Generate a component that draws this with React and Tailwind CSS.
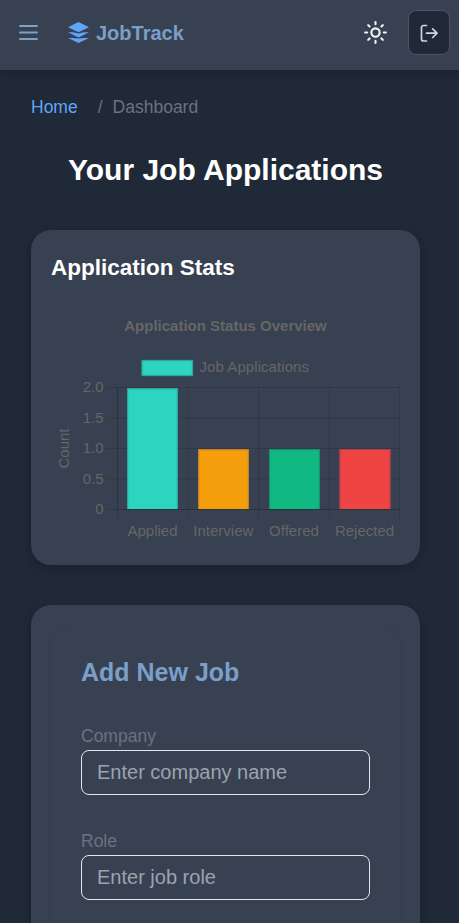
const FONT = "font-['Liberation_Sans',Arial,sans-serif]";

const bars = [
  { x: 127, h: 121, label: "Applied", cx: 152.5, fill: "#2dd4bf", line: "#27a79f" },
  { x: 198, h: 60, label: "Interview", cx: 223.3, fill: "#f59e0b", line: "#bd8127" },
  { x: 269, h: 60, label: "Offered", cx: 294, fill: "#10b981", line: "#1c9073" },
  { x: 339.5, h: 60, label: "Rejected", cx: 364.5, fill: "#ef4444", line: "#b83e4a" },
];

const ticks = [
  { label: "2.0", y: 387.5 },
  { label: "1.5", y: 418 },
  { label: "1.0", y: 448.5 },
  { label: "0.5", y: 479 },
  { label: "0", y: 509.5 },
];

function StatsChart() {
  return (
    <svg
      viewBox="51 305 349 240"
      className="block h-[240px] w-[349px]"
      fontFamily="'Liberation Sans', Arial, sans-serif"
      fontSize="15"
      fill="#666666"
    >
      <text x="225.5" y="330.5" textAnchor="middle" fontWeight="bold">Application Status Overview</text>
      <rect x="142" y="360.5" width="50.5" height="15" fill="#2dd4bf" stroke="#27a79f" strokeWidth="1.25" />
      <text x="199.5" y="372" textLength="109.5">Job Applications</text>
      <g stroke="#000" strokeOpacity="0.12" strokeWidth="1">
        {ticks.map((t) => <line key={t.label} x1="107" x2="400" y1={t.y} y2={t.y} />)}
        {[117.5, 188, 258.5, 329.5, 399.5].map((x) => <line key={x} x1={x} x2={x} y1="387" y2="519" />)}
        <line x1="117.5" x2="117.5" y1="387" y2="509" />
        <line x1="117" x2="400" y1="509.5" y2="509.5" />
      </g>
      {ticks.map((t) => <text key={t.label} x="103.5" y={t.y + 4.5} textAnchor="end">{t.label}</text>)}
      <text transform="translate(69 448.5) rotate(-90)" textAnchor="middle">Count</text>
      {bars.map((b) => (
        <g key={b.label}>
          <rect x={b.x} y={509 - b.h} width="51" height={b.h} fill={b.fill} />
          <path d={`M${b.x + 0.6} 509V${509.6 - b.h}h49.8V509`} fill="none" stroke={b.line} strokeWidth="1.2" />
          <text x={b.cx} y="536" textAnchor="middle">{b.label}</text>
        </g>
      ))}
    </svg>
  );
}

function Field({ label, placeholder }) {
  return (
    <label className="flex flex-col">
      <span className="h-[27px] pt-px text-[17.5px] leading-[25px] text-[#6b7280]">{label}</span>
      <input
        placeholder={placeholder}
        className="h-[45px] w-full rounded-[8px] border border-[#e5e7eb] bg-transparent px-[15px] text-[20px] outline-none placeholder:text-[#9ca3af]"
      />
    </label>
  );
}

export default function App() {
  return (
    <div className={`h-[923px] overflow-hidden bg-[#1f2937] ${FONT}`}>
      <header className="relative flex h-[70px] items-center bg-[#374151] pr-[9px] pl-[19px] shadow-[0_3px_8px_rgba(0,0,0,0.15)]">
        <svg className="mb-[5px] size-[19px]" viewBox="0 0 19 19" fill="none" stroke="#7da2ca" strokeWidth="1.9" strokeLinecap="round">
          <path d="M1 3h17M1 9.5h17M1 16h17" />
        </svg>
        <svg className="mb-[5px] ml-[30px] h-[21px] w-[21px]" viewBox="0 0 21 21" fill="#60a5fa">
          <path d="M10.5 0 21 5.2 10.5 10.3 0 5.2Z" />
          <path d="M0 10.3H5L10.5 11.5 16 10.3H21L10.5 15.4Z" />
          <path d="M0 16H5L10.5 16.6 16 16H21L10.5 21Z" />
        </svg>
        <span className="mb-[5px] ml-[7px] text-[20px] font-bold text-[#7a9fc9]">JobTrack</span>
        <svg className="mb-[5px] ml-auto size-[25px]" viewBox="0 0 24 24" fill="none" stroke="#f3f4f6" strokeWidth="2" strokeLinecap="round">
          <circle cx="12" cy="12" r="4" />
          <path d="M12 2v2M12 20v2M2 12h2M20 12h2M4.93 4.93l1.41 1.41M17.66 17.66l1.41 1.41M4.93 19.07l1.41-1.41M17.66 6.34l1.41-1.41" />
        </svg>
        <button className="mb-[5px] ml-[20px] flex h-[45px] w-[42px] items-center justify-center rounded-[8px] border border-[#4b5563] bg-[#1f2937]">
          <svg className="size-[20px]" viewBox="0 0 20 20" fill="none" stroke="#d1d5db" strokeWidth="1.7" strokeLinecap="round" strokeLinejoin="round">
            <path d="M7.5 2.5H4.5a2 2 0 0 0-2 2v11.500a2 2 0 0 0 2 2h3M7.5 10.2H18M13.700 5.9 18 10.2l-4.3 4.3" />
          </svg>
        </button>
      </header>
      <main className="w-[451px] px-[31px]">
        <nav className="flex h-[74px] items-center text-[17.5px]">
          <span className="text-[#60a5fa]">Home</span>
          <span className="ml-[20px] text-[#6b7280]">/</span>
          <span className="ml-[10px] text-[#6b7280]">Dashboard</span>
        </nav>
        <h1 className="mt-[6px] text-center text-[30px] leading-[40px] font-bold text-white">Your Job Applications</h1>
        <section className="mt-[40px] h-[335px] rounded-[20px] bg-[#374151] px-[20px] shadow-[0_3px_8px_rgba(0,0,0,0.2)]">
          <h2 className="h-[75px] pt-[23px] text-[22.5px] leading-[30px] font-bold text-white">Application Stats</h2>
          <StatsChart />
        </section>
        <section className="mt-[40px] h-[400px] rounded-[20px] bg-[#374151] p-[20px] shadow-[0_3px_8px_rgba(0,0,0,0.2)]">
          <form className="flex h-[400px] flex-col rounded-[20px] px-[30px] shadow-[0_2px_5px_rgba(0,0,0,0.08)]">
            <h2 className="pt-[30px] text-[25px] leading-[35px] font-bold text-[#7a9fc9]">Add New Job</h2>
            <div className="mt-[33px] flex flex-col gap-[33px]">
              <Field label="Company" placeholder="Enter company name" />
              <Field label="Role" placeholder="Enter job role" />
            </div>
          </form>
        </section>
      </main>
    </div>
  );
}
